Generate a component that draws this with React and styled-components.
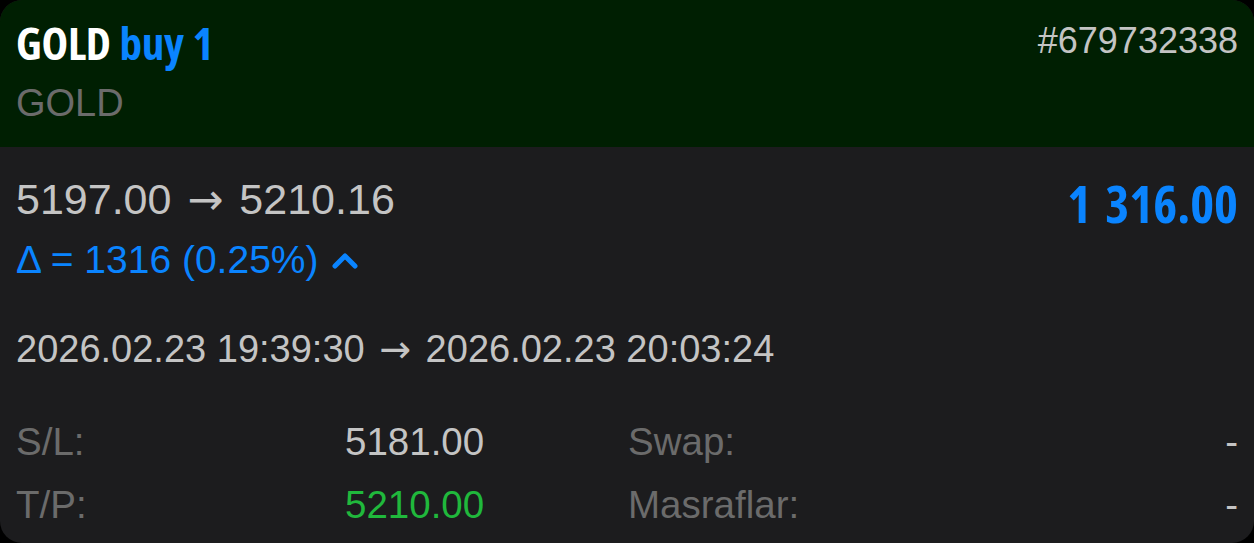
import React from "react";
import styled, { createGlobalStyle } from "styled-components";

const GlobalStyle = createGlobalStyle`
    html, body {
        margin: 0;
        padding: 0;
        background: #000;
    }
    body {
        font-family: "Liberation Sans", Arial, sans-serif;
    }
`;

const Card = styled.div`
    width: 1254px;
    height: 543px;
    border-radius: 22px;
    overflow: hidden;
    background: #1c1c1e;
    display: flex;
    flex-direction: column;
`;

const Header = styled.div`
    height: 147px;
    box-sizing: border-box;
    background: #001f02;
    padding: 20px 16px 0 16px;
    display: flex;
    justify-content: space-between;
    align-items: flex-start;
`;

const TitleBlock = styled.div`
    display: flex;
    flex-direction: column;
`;

const Title = styled.div`
    font-family: "Open Sans", sans-serif;
    font-stretch: 75%;
    font-weight: 700;
    font-size: 45px;
    line-height: 46px;
    letter-spacing: -0.3px;
    word-spacing: 1px;
    color: #fff;
`;

const Accent = styled.span`
    color: #0a84ff;
`;

const Subtitle = styled.div`
    font-size: 38px;
    line-height: 42px;
    margin-top: 16px;
    color: #6b6b6b;
`;

const Ticket = styled.div`
    font-size: 36px;
    line-height: 42px;
    color: #c4c4c4;
`;

const Body = styled.div`
    padding: 28px 16px 0 16px;
    display: flex;
    flex-direction: column;
`;

const PriceRow = styled.div`
    display: flex;
    justify-content: space-between;
    align-items: flex-start;
`;

const Prices = styled.div`
    font-size: 43px;
    line-height: 48px;
    color: #c4c4c4;
`;

const Arrow = styled.span`
    font-family: "DejaVu Sans", sans-serif;
    margin: 0 4px;
`;

const Profit = styled.div`
    font-family: "Open Sans", sans-serif;
    font-stretch: 75%;
    font-weight: 700;
    font-size: 51px;
    line-height: 56px;
    word-spacing: 5px;
    color: #0a84ff;
`;

const Delta = styled.div`
    display: flex;
    align-items: center;
    gap: 12px;
    font-size: 39px;
    line-height: 48px;
    color: #0a84ff;
    margin-top: 13px;
`;

const Dates = styled.div`
    font-size: 38px;
    line-height: 44px;
    color: #c4c4c4;
    margin-top: 43px;
`;

const Grid = styled.div`
    display: grid;
    grid-template-columns: 329px 283px 1fr auto;
    row-gap: 20px;
    margin-top: 49px;
    font-size: 38.5px;
    line-height: 43px;
`;

const Label = styled.div`
    color: #6b6b6b;
`;

const Value = styled.div`
    color: ${(p) => p.$color || "#c4c4c4"};
    text-align: ${(p) => (p.$right ? "right" : "left")};
`;

const Chevron = () => (
    <svg width="28" height="20" viewBox="0 0 28 20">
        <path
            d="M4 16 L14 6 L24 16"
            fill="none"
            stroke="#0a84ff"
            strokeWidth="5"
            strokeLinecap="round"
            strokeLinejoin="round"
        />
    </svg>
);

const App = () => {
    return (
        <>
            <GlobalStyle />
            <Card>
                <Header>
                    <TitleBlock>
                        <Title>
                            GOLD <Accent>buy 1</Accent>
                        </Title>
                        <Subtitle>GOLD</Subtitle>
                    </TitleBlock>
                    <Ticket>#679732338</Ticket>
                </Header>
                <Body>
                    <PriceRow>
                        <div>
                            <Prices>
                                5197.00 <Arrow>→</Arrow> 5210.16
                            </Prices>
                            <Delta>
                                <span>Δ = 1316 (0.25%)</span>
                                <Chevron />
                            </Delta>
                        </div>
                        <Profit>1 316.00</Profit>
                    </PriceRow>
                    <Dates>
                        2026.02.23 19:39:30 <Arrow>→</Arrow> 2026.02.23 20:03:24
                    </Dates>
                    <Grid>
                        <Label>S/L:</Label>
                        <Value>5181.00</Value>
                        <Label>Swap:</Label>
                        <Value $right>-</Value>
                        <Label>T/P:</Label>
                        <Value $color="#20b83c">5210.00</Value>
                        <Label>Masraflar:</Label>
                        <Value $right>-</Value>
                    </Grid>
                </Body>
            </Card>
        </>
    );
};

export default App;
